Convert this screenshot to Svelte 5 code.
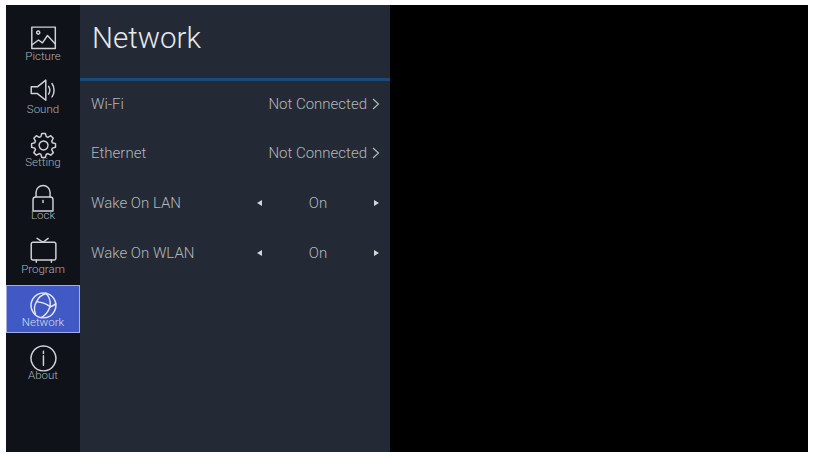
<script lang="ts">
    // cog outline: 8 rounded teeth around the centre
    function cog(cx: number, cy: number, outer: number, inner: number) {
        const pts: string[] = [];
        for (let i = 0; i < 8; i++) {
            const a = (i * Math.PI) / 4;
            for (const [off, r] of [
                [-0.3, inner],
                [-0.15, outer],
                [0.15, outer],
                [0.3, inner],
            ]) {
                const x = cx + r * Math.cos(a + off);
                const y = cy + r * Math.sin(a + off);
                pts.push(`${x.toFixed(2)} ${y.toFixed(2)}`);
            }
        }
        return `M${pts.join("L")}z`;
    }

    const menu = [
        {
            name: "Picture",
            paths: [
                "M2.500 1h21v19h-21z",
                "M2.500 17l6-4.500 3.500 2.500 4.500-6.500 7 7.500",
                "M8.200 4.500a1.400 1.400 0 1 0 .01 0z",
            ],
        },
        {
            name: "Sound",
            paths: [
                "M2 7h5.500l7.500-6v18l-7.500-6H2z",
                "M17.500 6.500c1.300 2 1.300 5 0 7",
                "M20.500 4c2.500 3.500 2.500 8.500 0 12",
            ],
        },
        {
            name: "Setting",
            paths: [cog(13, 12, 10.800, 8.200), "M13 8a4 4 0 1 0 .01 0z"],
        },
        {
            name: "Lock",
            paths: [
                "M6.300 10.500V6.500a6.250 6 0 0 1 12.500 0v4",
                "M6 10.700h13a2.400 2.400 0 0 1 2.400 2.400V23.200H3.600V13.100a2.400 2.400 0 0 1 2.400-2.400z",
                "M12.500 13.800v1.800",
            ],
        },
        {
            name: "Program",
            paths: [
                "M3.500 3.800h19a1.500 1.500 0 0 1 1.500 1.500v12.800a1.500 1.500 0 0 1-1.500 1.500h-19A1.500 1.500 0 0 1 2 18.100V5.300a1.500 1.500 0 0 1 1.500-1.500z",
                "M7.200 .3l5.300 3.500 4.600-3.500",
                "M6.500 19.600v2M20 19.600v2",
            ],
        },
        {
            name: "Network",
            paths: [
                "M12.900 1.800a11.100 11.100 0 1 0 .01 0z",
                "M6.800 9.500C8 6 11 3.500 15.500 2.200",
                "M6.800 9.500c4 .5 9 2 12 4.500",
                "M18.800 14c2-.5 3.500-1 5-2.500",
                "M18.800 14c-1.500 4-4 7.500-7.500 9.600",
                "M6.800 9.500c-2 3-2.500 7-1 11",
                "M15 2c3 3 4.500 7.500 3.800 12",
            ],
        },
        {
            name: "About",
            paths: [
                "M12.900 1.800a11.100 11.100 0 1 0 .01 0z",
                "M12.900 6.500v2M12.900 10.500v8.500",
            ],
        },
    ];

    const rows = [
        { label: "Wi-Fi", value: "Not Connected", kind: "link" },
        { label: "Ethernet", value: "Not Connected", kind: "link" },
        { label: "Wake On LAN", value: "On", kind: "toggle" },
        { label: "Wake On WLAN", value: "On", kind: "toggle" },
    ];
</script>

<div class="page">
    <main class="screen">
        <nav class="sidebar">
            {#each menu as item}
                <div class="menu-item" class:active={item.name === "Network"}>
                    <svg width="28" height="28" viewBox="0 0 25 25" fill="none" stroke="currentColor" stroke-width="1.300" stroke-linejoin="round" stroke-linecap="round">
                        {#each item.paths as d}
                            <path {d} />
                        {/each}
                    </svg>
                    <span>{item.name}</span>
                </div>
            {/each}
        </nav>

        <section class="panel">
            <h1>Network</h1>
            <div class="rows">
                {#each rows as row}
                    <div class="row">
                        <span class="label">{row.label}</span>
                        {#if row.kind === "link"}
                            <span class="value">{row.value}</span>
                            <svg class="chevron" width="8" height="12" viewBox="0 0 8 12" fill="none" stroke="currentColor" stroke-width="1.200">
                                <path d="M1 1l5.500 5L1 11" />
                            </svg>
                        {:else}
                            <div class="toggle">
                                <i class="arrow left"></i>
                                <span>{row.value}</span>
                                <i class="arrow right"></i>
                            </div>
                        {/if}
                    </div>
                {/each}
            </div>
        </section>

        <div class="preview"></div>
    </main>
</div>

<style>
    :global(body) {
        margin: 0;
        background: #fff;
    }

    .page {
        width: 815px;
        height: 459px;
        padding: 5px 7px 7px 6px;
        box-sizing: border-box;
        font-family: Roboto, "Liberation Sans", sans-serif;
        font-weight: 300;
    }

    .screen {
        display: flex;
        height: 100%;
        background: #000;
    }

    .sidebar {
        width: 74px;
        flex-shrink: 0;
        box-sizing: border-box;
        padding-top: 15px;
        display: flex;
        flex-direction: column;
        gap: 5px;
        background: #0f1319;
        color: #d0d3d6;
    }

    .menu-item {
        height: 48px;
        box-sizing: border-box;
        display: flex;
        flex-direction: column;
        align-items: center;
        padding-top: 6px;
        font-size: 11.500px;
        line-height: 12px;
    }

    .menu-item span {
        color: #aeb1b5;
    }

    .menu-item:nth-child(n + 5) span {
        margin-top: 1px;
    }

    .menu-item svg {
        display: block;
        margin-bottom: -4px;
        flex-shrink: 0;
        overflow: visible;
    }

    .menu-item.active {
        background: #4159c4;
        outline: 1px solid #a3aee0;
        outline-offset: -1px;
        color: #e4e7f6;
    }

    .menu-item.active span {
        color: #d4d9f2;
    }

    .panel {
        width: 310px;
        flex-shrink: 0;
        background: #232a35;
        color: #b4b7bb;
    }

    h1 {
        margin: 0;
        height: 76px;
        box-sizing: border-box;
        padding: 14px 0 0 12px;
        border-bottom: 3px solid #1b4a78;
        font-size: 29.500px;
        line-height: 38px;
        font-weight: 300;
        color: #e6e8ea;
    }

    .rows {
        display: flex;
        flex-direction: column;
    }

    .row {
        height: 49.670px;
        box-sizing: border-box;
        display: flex;
        align-items: center;
        padding: 0 10px 4.600px 11px;
        font-size: 15px;
    }

    .label {
        flex: 1;
    }

    .value {
        margin-right: -1px;
    }

    .chevron {
        margin-left: 6px;
    }

    .toggle {
        width: 122px;
        margin-right: 1px;
        display: flex;
        align-items: center;
        justify-content: space-between;
    }

    .arrow {
        width: 0;
        height: 0;
        border-top: 3.500px solid transparent;
        border-bottom: 3.500px solid transparent;
    }

    .arrow.left {
        border-right: 5px solid #d4d6d8;
    }

    .arrow.right {
        border-left: 5px solid #d4d6d8;
    }

    .preview {
        flex: 1;
    }
</style>
